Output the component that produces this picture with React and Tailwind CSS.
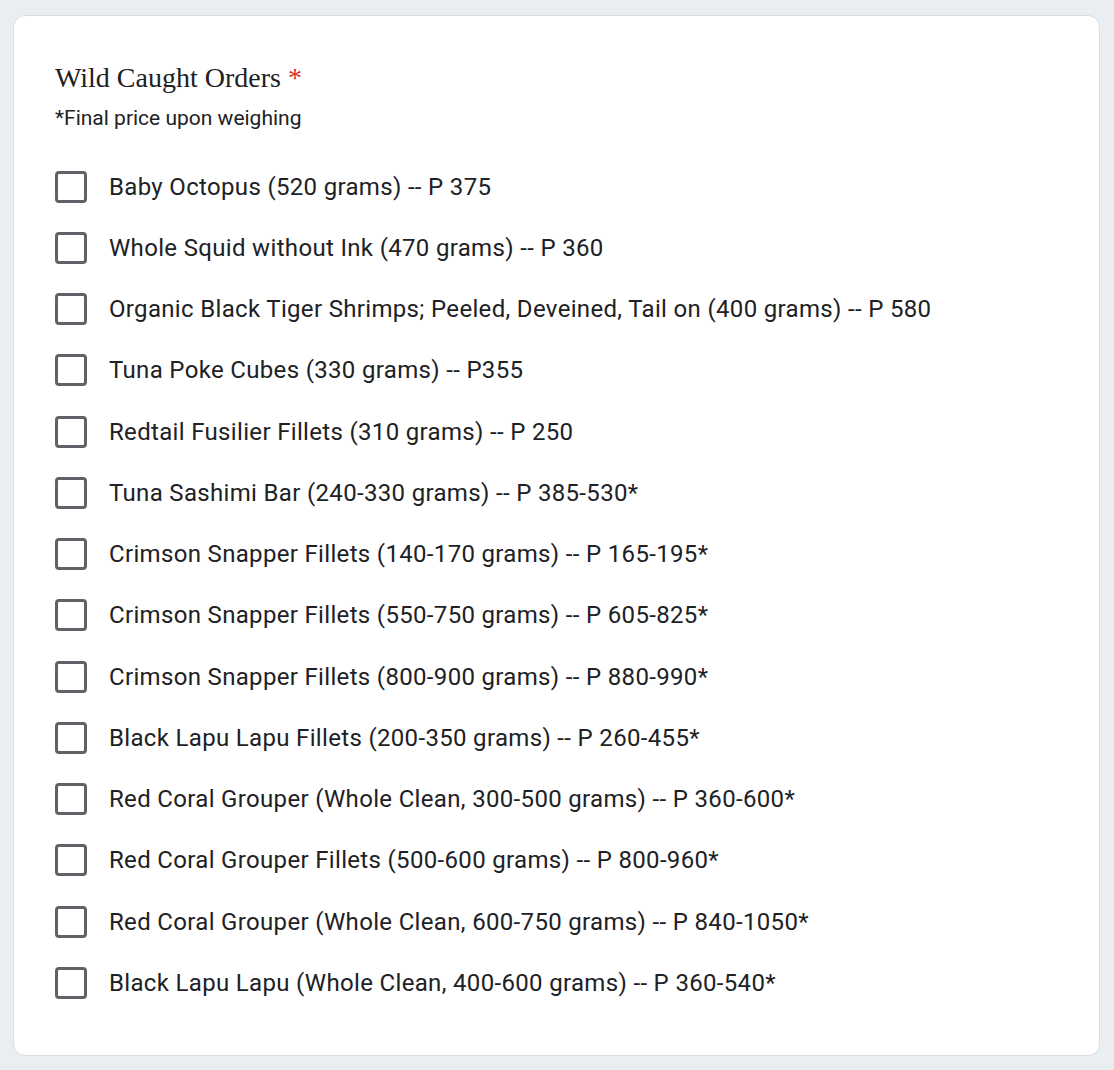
import React from "react"

const items = [
  "Baby Octopus (520 grams) -- P 375",
  "Whole Squid without Ink (470 grams) -- P 360",
  "Organic Black Tiger Shrimps; Peeled, Deveined, Tail on (400 grams) -- P 580",
  "Tuna Poke Cubes (330 grams) -- P355",
  "Redtail Fusilier Fillets (310 grams) -- P 250",
  "Tuna Sashimi Bar (240-330 grams) -- P 385-530*",
  "Crimson Snapper Fillets (140-170 grams) -- P 165-195*",
  "Crimson Snapper Fillets (550-750 grams) -- P 605-825*",
  "Crimson Snapper Fillets (800-900 grams) -- P 880-990*",
  "Black Lapu Lapu Fillets (200-350 grams) -- P 260-455*",
  "Red Coral Grouper (Whole Clean, 300-500 grams) -- P 360-600*",
  "Red Coral Grouper Fillets (500-600 grams) -- P 800-960*",
  "Red Coral Grouper (Whole Clean, 600-750 grams) -- P 840-1050*",
  "Black Lapu Lapu (Whole Clean, 400-600 grams) -- P 360-540*",
]

function OptionRow({ label }) {
  return (
    <label className="flex h-[61.25px] items-center gap-[22px] cursor-pointer">
      <span className="block h-[32px] w-[32px] shrink-0 rounded-[4px] border-[3px] border-[#5f6368] bg-white" />
      <span className="text-[24px] leading-[32px] tracking-[0.33px] text-[#202124]">{label}</span>
    </label>
  )
}

export default function App() {
  return (
    <div className="min-h-[1070px] bg-[#e9eef3] pt-[15px] pb-[15px] pl-[13px]">
      <div
        className="w-[1087px] rounded-[12px] border border-[#dadce0] bg-white pl-[41px] pt-[44px] pb-[41px]"
        style={{ fontFamily: "Roboto, 'Liberation Sans', sans-serif" }}
      >
        <h2
          className="text-[28px] leading-[36px] text-[#202124]"
          style={{ fontFamily: "'Liberation Serif', serif" }}
        >
          Wild Caught Orders <span className="text-[#d93025]">*</span>
        </h2>
        <p className="mt-[8px] text-[21px] leading-[28px] text-[#202124]">*Final price upon weighing</p>
        <div className="mt-[24px] flex flex-col">
          {items.map((item) => (
            <OptionRow key={item} label={item} />
          ))}
        </div>
      </div>
    </div>
  )
}
